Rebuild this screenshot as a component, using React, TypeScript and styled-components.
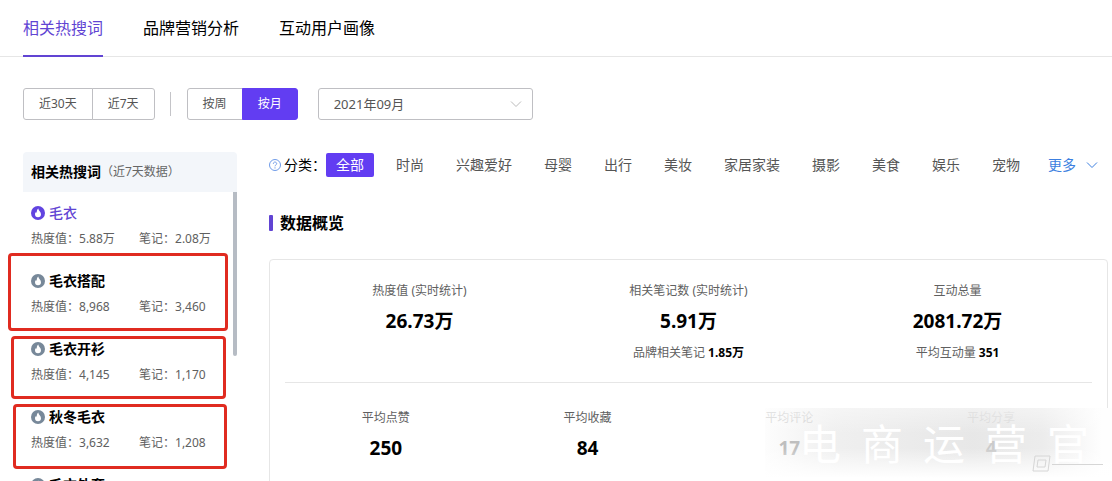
import React from "react";
import styled, { createGlobalStyle } from "styled-components";

const Global = createGlobalStyle`
  * { box-sizing: border-box; }
  body {
    margin: 0;
    background: #fff;
    color: #000;
    font-family: "Noto Sans", "Noto Sans CJK SC", sans-serif;
    font-size: 14px;
    line-height: 20px;
  }
  button, select { font-family: inherit; cursor: pointer; }
  h2, h3, p, ul { margin: 0; padding: 0; }
`;

const Page = styled.div`
  position: relative;
  height: 100vh;
  overflow: hidden;
`;

const Tabs = styled.nav`
  display: flex;
  gap: 40px;
  padding: 0 23px;
  border-bottom: 1px solid #e6e6e6;
`;

const Tab = styled.a<{ $active?: boolean }>`
  margin-bottom: -1px;
  padding: 16px 0 15px;
  border-bottom: 2px solid ${(p) => (p.$active ? "#6144d3" : "transparent")};
  color: ${(p) => (p.$active ? "#6144d3" : "#000")};
  font-size: 16px;
  line-height: 24px;
  text-decoration: none;
`;

const Filters = styled.div`
  display: flex;
  align-items: center;
  padding: 31px 23px 32px;
`;

const ButtonGroup = styled.div`
  display: flex;
`;

const GroupButton = styled.button<{ $active?: boolean }>`
  height: 32px;
  padding: 0 15px;
  border: 1px solid ${(p) => (p.$active ? "#623df2" : "#bfbfc3")};
  background: ${(p) => (p.$active ? "#623df2" : "#fff")};
  color: ${(p) => (p.$active ? "#fff" : "#555")};
  font-size: 12px;
  line-height: 20px;
  &:first-child { border-radius: 3px 0 0 3px; }
  &:last-child { border-radius: 0 3px 3px 0; }
  &:not(:first-child) { margin-left: -1px; }
`;

const Divider = styled.span`
  width: 1px;
  height: 24px;
  margin: 0 16px 0 15px;
  background: #c4c4c8;
`;

const SelectBox = styled.label`
  display: grid;
  align-items: center;
  width: 215px;
  margin-left: 20px;
  > * { grid-area: 1 / 1; }
  svg { justify-self: end; margin-right: 11px; pointer-events: none; }
`;

const MonthSelect = styled.select`
  appearance: none;
  height: 32px;
  padding: 0 15px;
  border: 1px solid #bfbfc3;
  border-radius: 3px;
  background: #fff;
  color: #555;
  font-size: 13px;
  line-height: 20px;
`;

const Columns = styled.div`
  display: flex;
  gap: 32px;
  padding: 0 4px 0 23px;
`;

const Sidebar = styled.aside`
  flex: none;
  width: 214px;
`;

const SideHead = styled.div`
  display: flex;
  align-items: center;
  height: 40px;
  padding: 0 8px;
  border-radius: 4px 4px 0 0;
  background: #f3f6fa;
`;

const SideTitle = styled.h2`
  font-size: 14px;
  line-height: 20px;
  font-weight: 700;
`;

const SideNote = styled.span`
  color: #666;
  font-size: 12px;
`;

const SideBody = styled.div`
  display: flex;
  justify-content: space-between;
`;

const WordList = styled.ul`
  display: grid;
  gap: 20px;
  padding: 11px 0 0 8px;
  list-style: none;
`;

const WordName = styled.a<{ $active?: boolean }>`
  display: flex;
  align-items: center;
  gap: 4px;
  color: ${(p) => (p.$active ? "#6144d3" : "#000")};
  font-weight: ${(p) => (p.$active ? 500 : 700)};
  text-decoration: none;
  svg { color: ${(p) => (p.$active ? "#6144e0" : "#778899")}; }
`;

const WordStats = styled.p`
  display: grid;
  grid-template-columns: 108px auto;
  padding: 6px 0 2px;
  color: #606060;
  font-size: 12px;
  line-height: 20px;
`;

const ScrollThumb = styled.div`
  width: 4px;
  height: 164px;
  border-radius: 0 0 2px 2px;
  background: #b6bcc4;
`;

const Main = styled.main`
  flex: 1;
  min-width: 0;
`;

const Categories = styled.div`
  display: flex;
  align-items: center;
  gap: 12px;
  padding-top: 1px;
  white-space: nowrap;
`;

const CategoryLabel = styled.span`
  display: flex;
  align-items: center;
  gap: 3px;
  width: 45px;
  svg { flex: none; }
`;

const Chip = styled.button<{ $active?: boolean }>`
  height: 24px;
  padding: 0 10px;
  border: 0;
  border-radius: 2px;
  background: ${(p) => (p.$active ? "#623df2" : "transparent")};
  color: ${(p) => (p.$active ? "#fff" : "#555")};
  font-size: 14px;
  line-height: 20px;
`;

const More = styled.button`
  display: flex;
  align-items: center;
  gap: 10px;
  padding: 0;
  margin-left: 6px;
  border: 0;
  background: none;
  color: #3c7fe0;
  font-size: 14px;
  line-height: 20px;
`;

const SectionTitle = styled.h3`
  display: flex;
  align-items: center;
  gap: 7px;
  padding: 34px 0 24px;
  font-size: 16px;
  line-height: 24px;
  font-weight: 700;
  &::before {
    content: "";
    width: 4px;
    height: 16px;
    border-radius: 1px;
    background: #6144d3;
  }
`;

const Card = styled.section`
  padding: 0 15px;
  border: 1px solid #e6e6e6;
  border-radius: 4px;
`;

const MetricRow = styled.div`
  display: grid;
  grid-auto-flow: column;
  grid-auto-columns: 1fr;
  padding: 21px 0 19px;
  text-align: center;
  & + & {
    padding: 25px 0 40px;
    border-top: 1px solid #e6e6e6;
  }
`;

const MetricLabel = styled.p`
  color: #606060;
  font-size: 12px;
  line-height: 20px;
`;

const MetricValue = styled.p`
  padding: 7px 0 9px;
  font-size: 19px;
  line-height: 26px;
  font-weight: 700;
`;

const Strong = styled.strong`
  color: #000;
`;

const Outline = styled.div<{ $x: number; $y: number; $w: number; $h: number }>`
  position: absolute;
  left: ${(p) => p.$x}px;
  top: ${(p) => p.$y}px;
  width: ${(p) => p.$w}px;
  height: ${(p) => p.$h}px;
  border: 3px solid #e02b20;
  border-radius: 4px;
  pointer-events: none;
`;

const Watermark = styled.div`
  position: absolute;
  right: 0;
  top: 408px;
  display: flex;
  justify-content: space-between;
  width: 347px;
  height: 73px;
  padding: 8px 23px 0 34px;
  background:
    linear-gradient(to bottom, rgba(255, 255, 255, 0.4), rgba(255, 255, 255, 0) 35%, rgba(255, 255, 255, 0) 55%, #fff 96%),
    linear-gradient(to right, rgba(252, 252, 252, 0.75), rgba(236, 236, 236, 0.82) 20%, rgba(228, 228, 228, 0.88) 60%, rgba(234, 234, 234, 0.9) 80%, #fefefe 97%);
  color: #fff;
  font-size: 42px;
  line-height: 56px;
  pointer-events: none;
`;

const Seal = styled.svg`
  position: absolute;
  right: 8px;
  top: 46px;
`;

const Chevron = ({ color }: { color: string }) => (
  <svg width="12" height="8" viewBox="0 0 12 8" fill="none" stroke={color} aria-hidden="true">
    <path d="M1 1.5 6 6.5 11 1.5" />
  </svg>
);

const Drop = () => (
  <svg width="14" height="14" viewBox="0 0 14 14" aria-hidden="true">
    <circle cx="7" cy="7" r="7" fill="currentColor" />
    <path d="M7.3 2.5C7.4 4.6 10 5.8 10 8.2a3 3 0 0 1-6 0c0-1 .5-1.7 1-2.3.2.5.4.7.7.8C5.7 5 6.1 3.5 7.3 2.5Z" fill="#fff" />
  </svg>
);

const Help = () => (
  <svg width="12" height="12" viewBox="0 0 12 12" fill="none" stroke="#6f9be8" aria-hidden="true">
    <circle cx="6" cy="6" r="5.5" />
    <path d="M4.3 4.8C4.3 2.5 7.7 2.5 7.7 4.7 7.7 5.9 6 5.900 6 7.3M6 8.3v1.2" />
  </svg>
);

const words = [
  { name: "毛衣", heat: "5.88万", notes: "2.08万" },
  { name: "毛衣搭配", heat: "8,968", notes: "3,460" },
  { name: "毛衣开衫", heat: "4,145", notes: "1,170" },
  { name: "秋冬毛衣", heat: "3,632", notes: "1,208" },
  { name: "毛衣外套", heat: "3,120", notes: "1,016" },
];

const categories = ["全部", "时尚", "兴趣爱好", "母婴", "出行", "美妆", "家居家装", "摄影", "美食", "娱乐", "宠物"];

const totals = [
  { label: "热度值 (实时统计)", value: "26.73万" },
  { label: "相关笔记数 (实时统计)", value: "5.91万", sub: "品牌相关笔记", subValue: "1.85万" },
  { label: "互动总量", value: "2081.72万", sub: "平均互动量", subValue: "351" },
];

const averages = [
  { label: "平均点赞", value: "250" },
  { label: "平均收藏", value: "84" },
  { label: "平均评论", value: "17" },
  { label: "平均分享", value: "4" },
];

export default function App() {
  return (
    <Page>
      <Global />
      <Tabs>
        <Tab href="#words" $active>相关热搜词</Tab>
        <Tab href="#brand">品牌营销分析</Tab>
        <Tab href="#users">互动用户画像</Tab>
      </Tabs>
      <Filters>
        <ButtonGroup>
          <GroupButton>近30天</GroupButton>
          <GroupButton>近7天</GroupButton>
        </ButtonGroup>
        <Divider />
        <ButtonGroup>
          <GroupButton>按周</GroupButton>
          <GroupButton $active>按月</GroupButton>
        </ButtonGroup>
        <SelectBox>
          <MonthSelect aria-label="月份">
            <option>2021年09月</option>
          </MonthSelect>
          <Chevron color="#bbb" />
        </SelectBox>
      </Filters>
      <Columns>
        <Sidebar>
          <SideHead>
            <SideTitle>相关热搜词</SideTitle>
            <SideNote>（近7天数据）</SideNote>
          </SideHead>
          <SideBody>
            <WordList>
              {words.map((w, i) => (
                <li key={w.name}>
                  <WordName href="#word" $active={i === 0}>
                    <Drop />
                    {w.name}
                  </WordName>
                  <WordStats>
                    <span>热度值：{w.heat}</span>
                    <span>笔记：{w.notes}</span>
                  </WordStats>
                </li>
              ))}
            </WordList>
            <ScrollThumb />
          </SideBody>
        </Sidebar>
        <Main>
          <Categories>
            <CategoryLabel>
              <Help />
              分类：
            </CategoryLabel>
            {categories.map((c, i) => (
              <Chip key={c} $active={i === 0}>{c}</Chip>
            ))}
            <More>
              更多
              <Chevron color="#3c7fe0" />
            </More>
          </Categories>
          <SectionTitle>数据概览</SectionTitle>
          <Card>
            <MetricRow>
              {totals.map((m) => (
                <div key={m.label}>
                  <MetricLabel>{m.label}</MetricLabel>
                  <MetricValue>{m.value}</MetricValue>
                  {m.sub && (
                    <MetricLabel>
                      {m.sub} <Strong>{m.subValue}</Strong>
                    </MetricLabel>
                  )}
                </div>
              ))}
            </MetricRow>
            <MetricRow>
              {averages.map((m) => (
                <div key={m.label}>
                  <MetricLabel>{m.label}</MetricLabel>
                  <MetricValue>{m.value}</MetricValue>
                </div>
              ))}
            </MetricRow>
          </Card>
        </Main>
      </Columns>
      <Outline $x={8} $y={253} $w={220} $h={78} />
      <Outline $x={11} $y={336} $w={215} $h={63} />
      <Outline $x={13} $y={404} $w={214} $h={65} />
      <Watermark>
        <Seal width="72" height="20" viewBox="0 0 72 20" fill="none" stroke="#d6d6d6" aria-hidden="true">
          <path d="M3 2h15l-2 15H1ZM6 6h8l-1 7H5ZM20 10.500h51" />
        </Seal>
        {Array.from("电商运营官").map((ch) => (
          <span key={ch}>{ch}</span>
        ))}
      </Watermark>
    </Page>
  );
}
